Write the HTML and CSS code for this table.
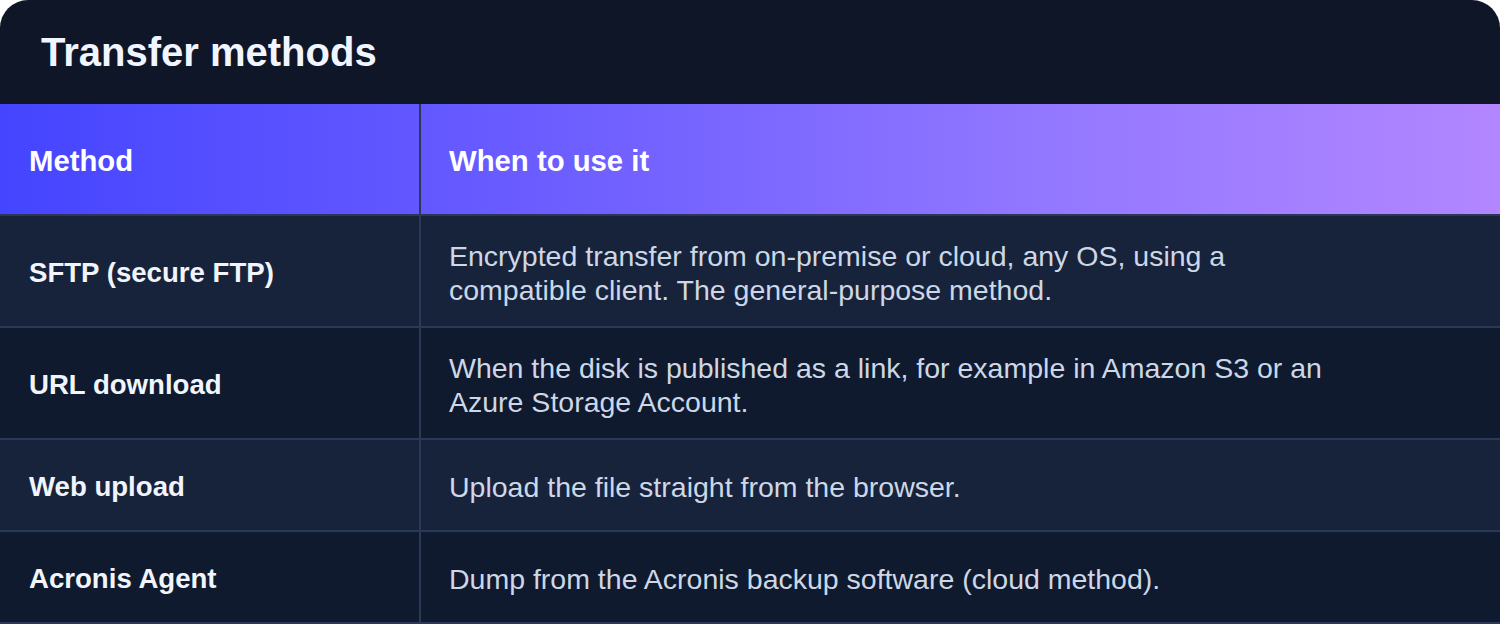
FILE: index.html
```html
<!DOCTYPE html>
<html lang="en">
<head>
<meta charset="utf-8">
<title>Transfer methods</title>
<link rel="stylesheet" href="styles.css">
</head>
<body>
<section class="card">
  <h1 class="title">Transfer methods</h1>
  <div class="table">
    <div class="row head">
      <div class="cell method">Method</div>
      <div class="cell desc">When to use it</div>
    </div>
    <div class="row odd">
      <div class="cell method">SFTP (secure FTP)</div>
      <div class="cell desc"><p>Encrypted transfer from on-premise or cloud, any OS, using a compatible client. The general-purpose method.</p></div>
    </div>
    <div class="row even">
      <div class="cell method">URL download</div>
      <div class="cell desc"><p>When the disk is published as a link, for example in Amazon S3 or an Azure Storage Account.</p></div>
    </div>
    <div class="row odd">
      <div class="cell method">Web upload</div>
      <div class="cell desc"><p>Upload the file straight from the browser.</p></div>
    </div>
    <div class="row even">
      <div class="cell method">Acronis Agent</div>
      <div class="cell desc"><p>Dump from the Acronis backup software (cloud method).</p></div>
    </div>
  </div>
</section>
</body>
</html>
```

FILE: styles.css
```css
* { box-sizing: border-box; }
html, body { margin: 0; padding: 0; background: #ffffff; }
body { font-family: "Liberation Sans", Arial, sans-serif; }

.card {
  background: #0e1628;
  border-radius: 28px 28px 0 0;
  overflow: hidden;
}

.title {
  margin: 0;
  padding: 28px 41px;
  font-size: 40px;
  line-height: 48px;
  font-weight: 700;
  color: #f1f5ff;
}

.row {
  display: grid;
  grid-template-columns: 421px 1fr;
  border-bottom: 2px solid #2a3957;
  min-height: 92px;
}

.row.head {
  min-height: 112px;
  background: linear-gradient(90deg, #4545ff 0%, #6a5cff 35%, #9378ff 70%, #b286ff 100%);
  border-bottom-color: #2b3658;
}

.row.odd { background: #17233b; }
.row.even { background: #0f1a2f; }

.cell {
  display: flex;
  align-items: center;
  padding: 23px 28px 19px;
}

.cell.method {
  border-right: 2px solid #2a3957;
  padding-left: 29px;
  font-size: 27.6px;
  font-weight: 700;
  color: #f1f5fb;
}

.cell.desc {
  font-size: 28.5px;
  line-height: 34px;
  color: #cdd7e6;
}

.cell.desc p { margin: 0; max-width: 880px; }

.head .cell {
  font-size: 29.3px;
  font-weight: 700;
  color: #ffffff;
}

.head .cell.method { border-right-color: #2b3658; }
```
